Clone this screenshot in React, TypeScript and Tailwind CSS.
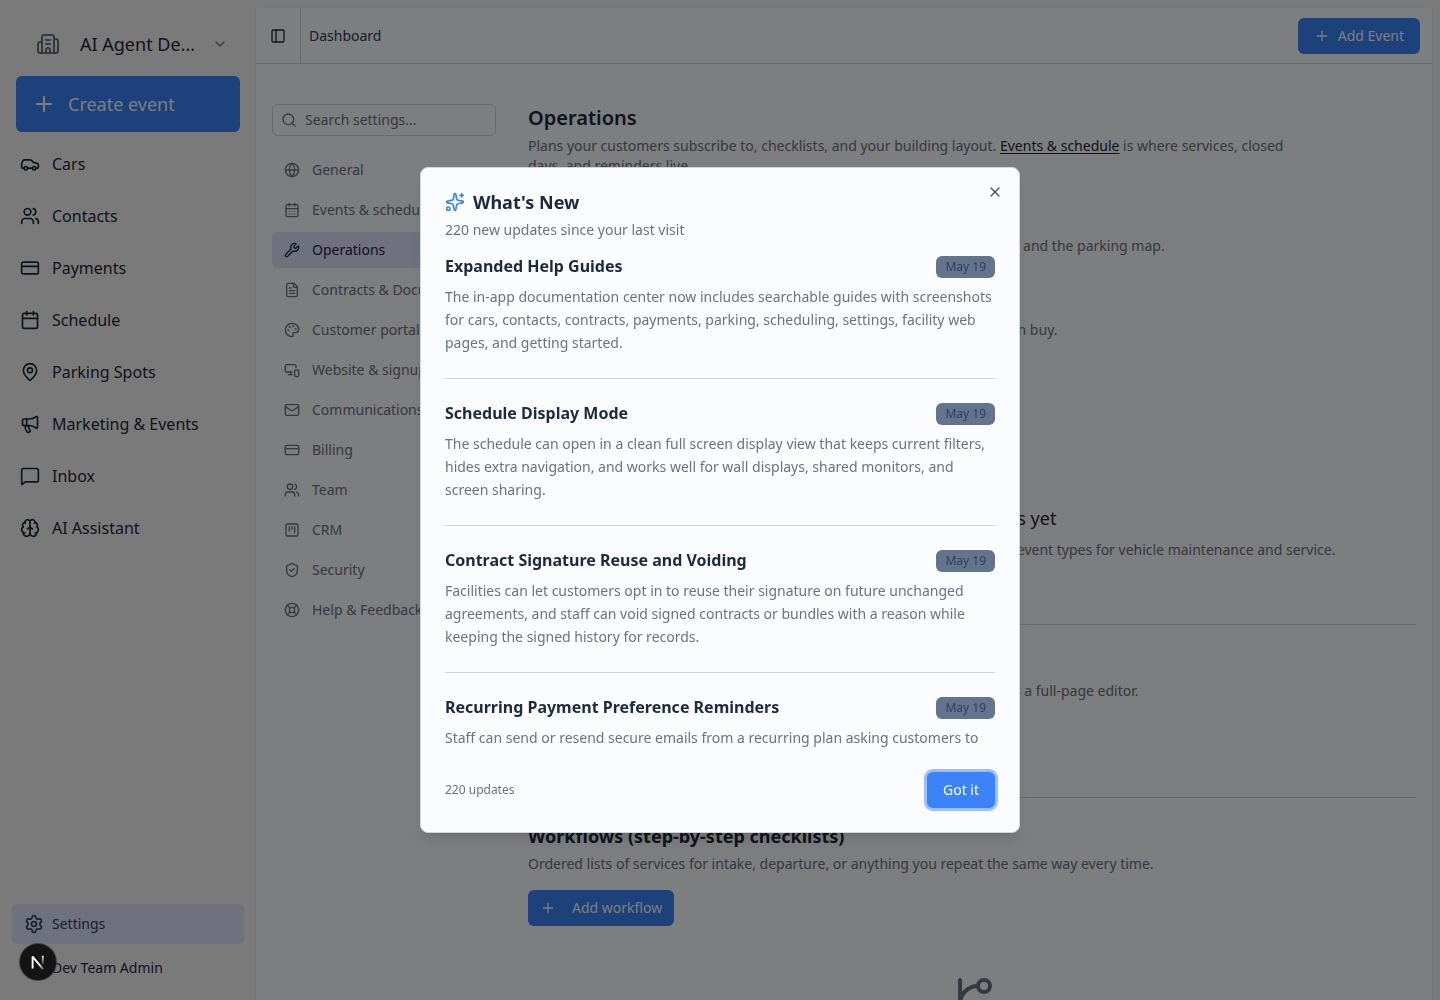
import React from 'react';
import {
  Brain,
  Building2,
  Calendar,
  CalendarDays,
  Car,
  ChevronDown,
  CreditCard,
  FileText,
  Globe,
  LifeBuoy,
  Mail,
  MapPin,
  Megaphone,
  MessageSquare,
  MonitorSmartphone,
  Palette,
  PanelLeft,
  Plus,
  Search,
  Settings,
  ShieldCheck,
  Sparkles,
  SquareKanban,
  Users,
  Wrench,
  X,
} from 'lucide-react';

const mainNav = [
  { label: 'Cars', icon: Car },
  { label: 'Contacts', icon: Users },
  { label: 'Payments', icon: CreditCard },
  { label: 'Schedule', icon: Calendar },
  { label: 'Parking Spots', icon: MapPin },
  { label: 'Marketing & Events', icon: Megaphone },
  { label: 'Inbox', icon: MessageSquare },
  { label: 'AI Assistant', icon: Brain },
];

const settingsNav = [
  { label: 'General', icon: Globe },
  { label: 'Events & schedule', icon: CalendarDays },
  { label: 'Operations', icon: Wrench, active: true },
  { label: 'Contracts & Documents', icon: FileText },
  { label: 'Customer portal', icon: Palette },
  { label: 'Website & signup', icon: MonitorSmartphone },
  { label: 'Communications', icon: Mail },
  { label: 'Billing', icon: CreditCard },
  { label: 'Team', icon: Users },
  { label: 'CRM', icon: SquareKanban },
  { label: 'Security', icon: ShieldCheck },
  { label: 'Help & Feedback', icon: LifeBuoy },
];

const updates = [
  {
    title: 'Expanded Help Guides',
    date: 'May 19',
    text: 'The in-app documentation center now includes searchable guides with screenshots for cars, contacts, contracts, payments, parking, scheduling, settings, facility web pages, and getting started.',
  },
  {
    title: 'Schedule Display Mode',
    date: 'May 19',
    text: 'The schedule can open in a clean full screen display view that keeps current filters, hides extra navigation, and works well for wall displays, shared monitors, and screen sharing.',
  },
  {
    title: 'Contract Signature Reuse and Voiding',
    date: 'May 19',
    text: 'Facilities can let customers opt in to reuse their signature on future unchanged agreements, and staff can void signed contracts or bundles with a reason while keeping the signed history for records.',
  },
  {
    title: 'Recurring Payment Preference Reminders',
    date: 'May 19',
    text: 'Staff can send or resend secure emails from a recurring plan asking customers to',
  },
];

const Sidebar: React.FC = () => (
  <aside className="flex w-64 shrink-0 flex-col">
    <div className="px-4 pt-4">
      <button className="flex h-14 w-full items-center pr-3 pl-5 text-lg text-slate-800">
        <Building2 className="mr-5 size-6 text-gray-500" />
        <span className="flex-1 text-left">AI Agent De...</span>
        <ChevronDown className="size-4 text-gray-500" />
      </button>
      <button className="mt-1 flex h-14 w-full items-center gap-3 rounded-md bg-[#3b82f6] px-4 text-lg text-slate-50">
        <Plus className="size-6" />
        Create event
      </button>
    </div>
    <nav className="mt-1.5 flex flex-col px-3">
      {mainNav.map(({ label, icon: Icon }) => (
        <a key={label} href="#" className="flex h-[52px] items-center gap-3 px-2 text-base text-slate-800">
          <Icon className="size-5" />
          {label}
        </a>
      ))}
    </nav>
    <div className="mt-auto flex flex-col px-3 pb-3 text-sm text-slate-800">
      <a href="#" className="flex h-10 items-center gap-2 rounded-md bg-[#e0e2ff] px-3 text-slate-700">
        <Settings className="size-5" />
        Settings
      </a>
      <button className="mt-1 flex h-10 items-center pl-10">Dev Team Admin</button>
    </div>
  </aside>
);

const SettingsNav: React.FC = () => (
  <div className="w-56 shrink-0">
    <label className="flex h-8 items-center gap-2 rounded-md border border-gray-300 px-2">
      <Search className="size-4 shrink-0 text-gray-500" />
      <input
        type="search"
        aria-label="Search settings"
        placeholder="Search settings..."
        className="w-full min-w-0 bg-transparent text-sm outline-none placeholder:text-gray-500"
      />
    </label>
    <nav className="mt-4 flex flex-col gap-1">
      {settingsNav.map(({ label, icon: Icon, active }) => (
        <a
          key={label}
          href="#"
          className={
            active
              ? 'flex h-9 items-center gap-3 rounded-md bg-[#e0e2ff] px-3 text-sm whitespace-nowrap text-slate-800'
              : 'flex h-9 items-center gap-3 rounded-md px-3 text-sm whitespace-nowrap text-gray-500'
          }
        >
          <Icon className="size-4" />
          {label}
        </a>
      ))}
    </nav>
  </div>
);

const SectionHead: React.FC<{ title: string; text: string }> = ({ title, text }) => (
  <>
    <h2 className="text-lg font-bold text-slate-800">{title}</h2>
    <p className="mt-1 text-sm text-gray-500">{text}</p>
  </>
);

const AddButton: React.FC<{ label: string }> = ({ label }) => (
  <button className="mt-4 flex h-9 items-center gap-4 rounded-md bg-[#3b82f6] px-3 text-sm text-slate-50">
    <Plus className="size-4" />
    {label}
  </button>
);

const BranchIcon: React.FC = () => (
  <svg
    className="size-12 text-gray-500"
    viewBox="0 0 24 24"
    fill="none"
    stroke="currentColor"
    strokeWidth="2"
    strokeLinecap="round"
    strokeLinejoin="round"
  >
    <path d="M15 6a9 9 0 0 0-9 9V3" />
    <circle cx="18" cy="6" r="3" />
    <circle cx="6" cy="18" r="3" />
  </svg>
);

const Operations: React.FC = () => (
  <div className="min-w-0 flex-1">
    <h1 className="text-xl font-semibold text-slate-800">Operations</h1>
    <p className="mt-1 max-w-3xl text-sm text-gray-500">
      Plans your customers subscribe to, checklists, and your building layout.{' '}
      <a href="#" className="text-slate-800 underline underline-offset-2">Events &amp; schedule</a> is where services,
      closed days, and reminders live.
    </p>

    <section className="mt-7">
      <SectionHead
        title="Building layout"
        text="Set up all the buildings, floors, and zones of your facility for contracts, cars, and the parking map."
      />
    </section>

    <section className="mt-8">
      <SectionHead
        title="Services"
        text="Manage all the plans, prices, and one-time services that your customers can buy."
      />
      <AddButton label="Add service" />
      <div className="flex flex-col items-center py-12">
        <Wrench className="size-12 text-gray-500" />
        <h3 className="mt-4 text-lg text-slate-800">No service types yet</h3>
        <p className="mt-2 text-sm text-gray-500">
          Choose your first service types to get started. Services are the event types for vehicle maintenance and service.
        </p>
      </div>
    </section>

    <section className="mt-4 border-t border-gray-300 pt-6 pb-11">
      <SectionHead
        title="Checklists"
        text="Design the lists your staff fill in during intake and departure. Each opens as a full-page editor."
      />
      <AddButton label="Add checklist" />
    </section>

    <section className="border-t border-gray-300 pt-6">
      <SectionHead
        title="Workflows (step-by-step checklists)"
        text="Ordered lists of services for intake, departure, or anything you repeat the same way every time."
      />
      <AddButton label="Add workflow" />
      <div className="flex flex-col items-center py-12">
        <BranchIcon />
      </div>
    </section>
  </div>
);

const WhatsNew: React.FC = () => (
  <div className="fixed inset-0 flex items-center justify-center bg-black/50">
    <div
      role="dialog"
      aria-labelledby="whats-new"
      className="relative w-full max-w-[600px] rounded-lg border border-gray-300 bg-[#fbfcfe] p-6 shadow-lg"
    >
      <button aria-label="Close" className="absolute top-4 right-4 text-gray-600">
        <X className="size-4" />
      </button>
      <h2 id="whats-new" className="flex items-center gap-2 text-lg leading-5 font-bold text-slate-800">
        <Sparkles className="size-5 text-[#3b82f6]" />
        What's New
      </h2>
      <p className="mt-2 text-sm text-gray-500">220 new updates since your last visit</p>

      <div className="mt-4 h-[500px] overflow-y-auto [scrollbar-width:none]">
        {updates.map((item, i) => (
          <article key={item.title} className={i > 0 ? 'mt-6 border-t border-gray-300 pt-6' : ''}>
            <div className="flex items-start justify-between">
              <h3 className="text-base leading-5 font-bold text-slate-800">{item.title}</h3>
              <span className="flex h-[22px] items-center rounded-md bg-slate-500 px-[9px] text-xs text-slate-700">
                {item.date}
              </span>
            </div>
            <p className="mt-[7px] text-sm leading-[23px] text-gray-500">{item.text}</p>
          </article>
        ))}
      </div>

      <div className="mt-4 flex items-center justify-between">
        <span className="text-xs text-gray-500">220 updates</span>
        <button className="h-9 rounded-md bg-[#3b82f6] px-4 text-sm text-slate-50 ring-3 ring-[#3b82f6]/50">
          Got it
        </button>
      </div>
    </div>
  </div>
);

export default function App() {
  return (
    <div className="flex h-screen overflow-hidden bg-[#f5f5f5] font-['Noto_Sans',sans-serif]">
      <Sidebar />
      <main className="mt-2 mr-2 flex min-w-0 flex-1 flex-col overflow-hidden bg-[#fbfcfe] shadow-sm">
        <header className="flex h-14 shrink-0 items-center border-b border-gray-300 pr-3">
          <button
            aria-label="Toggle sidebar"
            className="flex h-full w-[45px] items-center justify-center border-r border-gray-300 text-slate-800"
          >
            <PanelLeft className="size-4" />
          </button>
          <span className="ml-2 text-sm text-slate-700">Dashboard</span>
          <button className="ml-auto flex h-9 items-center gap-2 rounded-md bg-[#3b82f6] px-4 text-sm text-slate-50">
            <Plus className="size-4" />
            Add Event
          </button>
        </header>
        <div className="flex min-h-0 flex-1 gap-8 overflow-hidden px-4 pt-10">
          <SettingsNav />
          <Operations />
        </div>
      </main>
      <WhatsNew />
      <button
        aria-label="Open Next.js Dev Tools"
        className="fixed bottom-5 left-5 flex size-9 items-center justify-center rounded-full bg-[#141414] ring-1 ring-[#454545]"
      >
        <svg className="size-6" viewBox="0 0 20 20" fill="none">
          <defs>
            <linearGradient id="stem" x1="0" y1="4" x2="0" y2="13" gradientUnits="userSpaceOnUse">
              <stop stopColor="#fff" />
              <stop offset="1" stopColor="#fff" stopOpacity="0" />
            </linearGradient>
            <linearGradient id="diagonal" x1="5" y1="4" x2="15" y2="17" gradientUnits="userSpaceOnUse">
              <stop offset="0.6" stopColor="#fff" />
              <stop offset="1" stopColor="#fff" stopOpacity="0.2" />
            </linearGradient>
          </defs>
          <path d="M5.500 15.500V5.500L14.200 16" stroke="url(#diagonal)" strokeWidth="1.600" strokeLinejoin="bevel" />
          <path d="M14 4.800V13" stroke="url(#stem)" strokeWidth="1.600" />
        </svg>
      </button>
    </div>
  );
}
